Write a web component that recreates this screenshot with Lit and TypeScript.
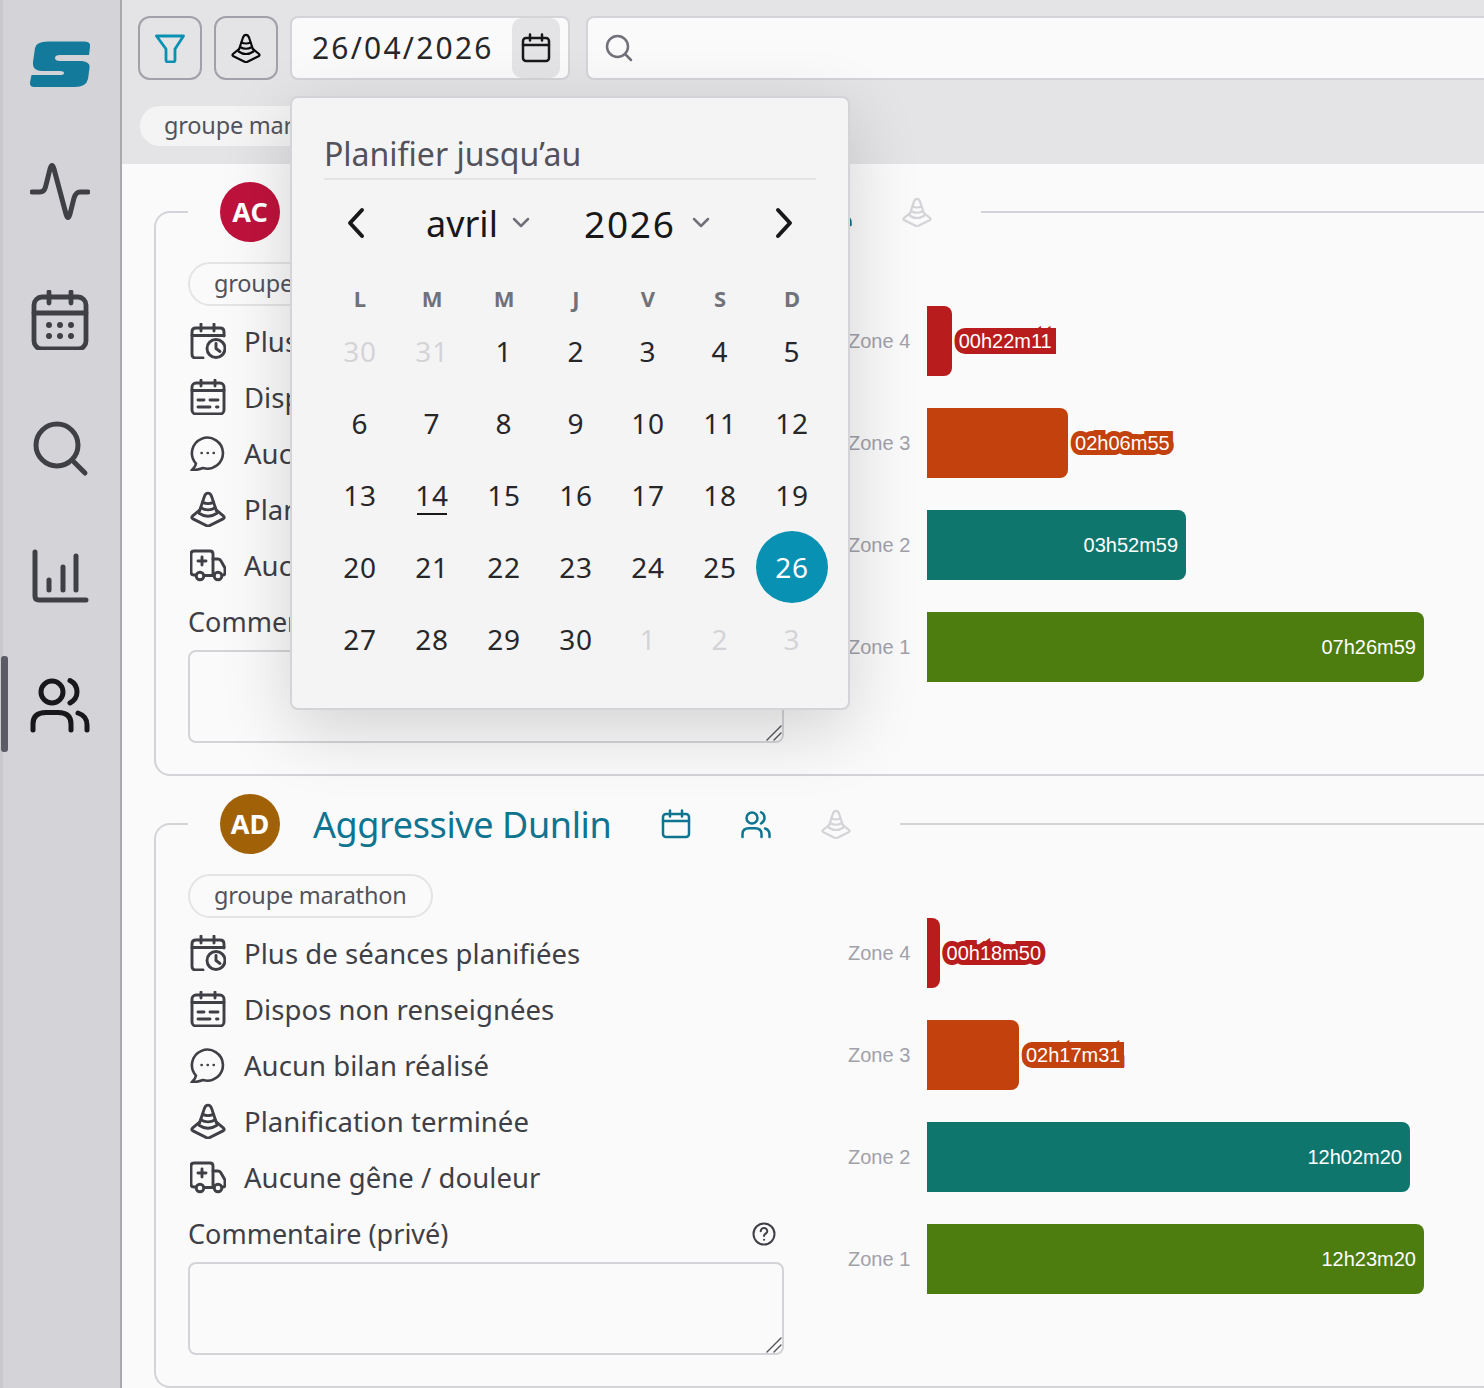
import { LitElement, html, svg, css } from "lit";
import { customElement } from "lit/decorators.js";

const ico = (vb: number, sw: number, body: unknown) =>
  html`<svg class="ic" viewBox="0 0 ${vb} ${vb}" fill="none" stroke="currentColor" stroke-width="${sw}" stroke-linecap="round" stroke-linejoin="round">${body}</svg>`;

const cone = (sw = 2.2) => ico(30, sw, svg`
  <path d="M8 16.500L12 4.500Q13 1.800 15 1.800Q17 1.800 18 4.500L22 16.500"/>
  <path d="M10.500 9.500Q15 11.500 19.500 9.500M9 14Q15 17.500 21 14"/>
  <path d="M8 16L2 21Q.8 22.200 2.500 23.200L14 29Q15 29.500 16 29L27.500 23.200Q29.200 22.200 28 21L22 16"/>
  <path d="M7.500 18.500Q15 23.500 22.500 18.500"/>`);
const calendar = () => ico(30, 2.5, svg`<rect x="2" y="5" width="26" height="23" rx="3"/><path d="M2 12H28M9 1.500V7.500M21 1.500V7.500"/>`);
const users = () => ico(60, 5, svg`<circle cx="22" cy="18" r="11"/><path d="M40 6.500Q47 10 47 18Q47 25 40 29"/><path d="M3 56V50Q3 38.500 16 38.500H28Q41 38.500 41 50V56"/><path d="M48 39Q57 42 57 51V56"/>`);
const caret = () => ico(20, 2.5, svg`<path d="M3 6L10 13L17 6"/>`);

const rowIcons = [
  ico(36, 2.9, svg`<path d="M13 35H6Q2 35 2 31V9Q2 5 6 5H30Q34 5 34 9V13"/><path d="M2 12.500H34M11 1V8M24 1V8"/><circle cx="26" cy="25.500" r="9"/><path d="M26 20.500V25.500L30 28.500"/>`),
  ico(36, 2.9, svg`<rect x="2" y="4" width="32" height="31" rx="4"/><path d="M2 11.500H34M11 1V7M25 1V7M8 21H14M20 21H28M8 28H20M26.500 28H28"/>`),
  ico(36, 2.6, svg`<path d="M6 28.600A15.500 15.500 0 1 1 13 33Q8 35 1.500 35.400Q5.500 32 6 28.600Z"/><path d="M11.600 18H11.700M17.700 18H17.800M23.700 18H23.800"/>`),
  cone(2.4),
  ico(36, 2.9, svg`<path d="M6 28H4Q1 28 1 25V7Q1 4 4 4H20Q23 4 23 7V28"/><path d="M23 12H28Q30 12 31 14L35 21V26Q35 28 32.500 28"/><circle cx="10" cy="29" r="3.800"/><circle cx="28" cy="29" r="3.800"/><path d="M14 28.500H24M12 10V18M8 14H16"/>`),
];

type Zone = { n: number; t: string; c: string; square?: boolean };
type Athlete = { ini: string; name: string; w: number; col: string; zones: Zone[] };
const z4 = "#b91c1c", z3 = "#c2410c", z2 = "#0f766e", z1 = "#4d7c0f";
const athletes: Athlete[] = [
  { ini: "AC", name: "Adventurous Cockatoo", w: 379, col: "#be123c", zones: [
    { n: 4, t: "00h22m11", c: z4, square: true }, { n: 3, t: "02h06m55", c: z3 }, { n: 2, t: "03h52m59", c: z2 }, { n: 1, t: "07h26m59", c: z1 } ] },
  { ini: "AD", name: "Aggressive Dunlin", w: 298, col: "#a16207", zones: [
    { n: 4, t: "00h18m50", c: z4 }, { n: 3, t: "02h17m31", c: z3, square: true }, { n: 2, t: "12h02m20", c: z2 }, { n: 1, t: "12h23m20", c: z1 } ] },
];
const secs = (t: string) => { const m = t.match(/(\d+)h(\d+)m(\d+)/)!; return +m[1] * 3600 + +m[2] * 60 + +m[3]; };
const rows = ["Plus de séances planifiées", "Dispos non renseignées", "Aucun bilan réalisé", "Planification terminée", "Aucune gêne / douleur"];
const days: [string, string][] = [];
["30", "31"].forEach((d) => days.push([d, "muted"]));
for (let i = 1; i <= 30; i++) days.push([String(i), i === 26 ? "sel" : i === 14 ? "today" : ""]);
["1", "2", "3"].forEach((d) => days.push([d, "muted"]));

@customElement("app-root")
export class AppRoot extends LitElement {
  static styles = css`
    :host { display: flex; width: 1484px; height: 1388px; overflow: hidden; font-family: "Noto Sans", sans-serif; color: #3f3f46; background: #fafafa; }
    .ic { display: block; width: 100%; height: 100%; }
    .side { flex: none; width: 120px; background: #d4d4d8; box-shadow: inset 3px 0 0 #c9c9cd; border-right: 2px solid #a8a8ad; position: relative; display: flex; flex-direction: column; }
    .side .item { height: 128px; display: flex; align-items: center; justify-content: center; }
    .side .glyph { width: 60px; height: 60px; }
    .side .on { color: #18181b; }
    .indicator { position: absolute; left: 1px; top: 656px; width: 7px; height: 96px; border-radius: 3px; background: #5b5b66; }
    .main { flex: 1; min-width: 0; display: flex; flex-direction: column; }
    .head { flex: none; height: 164px; box-sizing: border-box; padding: 16px 0 0 16px; background: #e4e4e7; }
    .tools { display: flex; gap: 12px; height: 64px; }
    .btn { flex: none; width: 64px; height: 64px; box-sizing: border-box; border: 2px solid #a1a1aa; border-radius: 12px; display: flex; align-items: center; justify-content: center; background: #e4e4e7; }
    .btn svg { width: 30px; height: 30px; }
    .filter { color: #0891b2; }
    .cone-b { color: #09090b; }
    .date { flex: none; width: 280px; height: 64px; box-sizing: border-box; border: 2px solid #d4d4d8; border-radius: 8px; background: #fafafa; position: relative; display: flex; align-items: center; padding: 0 0 2px 20px; font-size: 30px; letter-spacing: 2.2px; color: #27272a; }
    .date .cal { position: absolute; right: 8px; top: 0; width: 48px; height: 60px; border-radius: 10px; background: #e4e4e7; color: #18181b; display: flex; align-items: center; justify-content: center; }
    .date .cal svg { width: 30px; height: 30px; }
    .search { flex: none; width: 1000px; height: 64px; box-sizing: border-box; margin-left: 4px; border: 2px solid #d4d4d8; border-radius: 8px; background: #fafafa; display: flex; align-items: center; padding-left: 17px; color: #71717a; }
    .search svg { width: 28px; height: 28px; }
    .chip { display: inline-flex; align-items: center; box-sizing: border-box; white-space: nowrap; font-size: 23.5px; color: #52525b; letter-spacing: -.2px; border-radius: 22px; padding-bottom: 2px; }
    .head .chip { height: 40px; margin: 26px 0 0 2px; padding: 0 24px 2px; background: #f4f4f5; }
    .content { flex: 1; display: flex; flex-direction: column; gap: 18px; padding: 18px 0 0 32px; }
    fieldset { flex: none; width: 1500px; box-sizing: border-box; margin: 0; padding: 20px 32px 31px; border: 2px solid #d4d4d8; border-radius: 16px; min-inline-size: 0; }
    legend { display: flex; align-items: center; padding: 0 40px 0 32px; margin: 0; height: 60px; }
    .avatar { flex: none; width: 60px; height: 60px; box-sizing: border-box; padding-bottom: 2px; border-radius: 50%; color: #fff; font-weight: 700; font-size: 27px; display: flex; align-items: center; justify-content: center; }
    .name { flex: none; margin-left: 33px; font-size: 36px; color: #0e7490; white-space: nowrap; letter-spacing: -.4px; }
    .lact { flex: none; width: 48px; height: 48px; margin-left: 32px; display: flex; align-items: center; justify-content: center; color: #0e7490; }
    .lact.first { margin-left: 41px; }
    .lact svg { width: 30px; height: 30px; }
    .lact.off { color: #d4d4d8; }
    .body { display: flex; gap: 64px; }
    .left { flex: none; width: 596px; display: flex; flex-direction: column; }
    .left .chip { align-self: flex-start; height: 44px; padding: 0 24px 2px; border: 2px solid #e4e4e7; background: #fafafa; margin-bottom: 7px; }
    .row { height: 56px; display: flex; align-items: center; gap: 18px; font-size: 27.5px; letter-spacing: .05px; white-space: nowrap; }
    .row .i { flex: none; width: 36px; height: 36px; margin-left: 2px; }
    .clabel { height: 57px; display: flex; align-items: center; justify-content: space-between; font-size: 27px; padding-right: 8px; }
    .help { display: block; width: 24px; height: 24px; }
    .ta { position: relative; height: 93px; }
    textarea { display: block; width: 596px; height: 93px; box-sizing: border-box; border: 2px solid #d4d4d8; border-radius: 8px; background: transparent; margin: 0; padding: 8px; outline: none; resize: none; }
    .grip { position: absolute; right: 2px; bottom: 2px; width: 16px; height: 16px; color: #52525b; }
    .chart { padding-top: 44px; display: flex; flex-direction: column; gap: 32px; font-family: "Liberation Sans", sans-serif; font-size: 20px; }
    .zone { height: 70px; display: flex; align-items: center; }
    .zone .lab { flex: none; width: 79px; color: #a1a1aa; }
    .bar { flex: none; height: 70px; border-radius: 0 8px 8px 0; display: flex; align-items: center; justify-content: flex-end; color: #fff; box-sizing: border-box; }
    .out { margin-left: 3px; height: 26px; display: flex; align-items: center; padding: 0 4px; color: #fff; white-space: nowrap; -webkit-text-stroke-width: 10px; paint-order: stroke fill; stroke-linejoin: round; }
    .out.square { border-radius: 10px 0 0 10px; }
    .pop { position: absolute; left: -2px; top: 78px; z-index: 5; width: 560px; height: 614px; box-sizing: border-box; padding: 36px 19px 0 32px; border: 2px solid #d4d4d8; border-radius: 8px; background: #f4f4f5; box-shadow: 0 20px 70px rgba(0,0,0,.16); color: #18181b; letter-spacing: 0; }
    .ptitle { width: 492px; height: 46px; box-sizing: border-box; border-bottom: 2px solid #e4e4e7; font-size: 32px; line-height: 40px; color: #52525b; }
    .nav { display: flex; align-items: center; height: 64px; margin-top: 11px; }
    .chev { flex: none; width: 48px; height: 48px; color: #18181b; }
    .chev.p { margin-left: 8px; }
    .month { margin-left: 46px; font-size: 36px; }
    .year { margin-left: 53px; font-size: 37px; letter-spacing: 1.8px; }
    .caret { flex: none; width: 20px; height: 20px; margin-left: 13px; color: #71717a; }
    .year + .caret { margin-left: 15px; }
    .chev.n { margin-left: auto; margin-right: 21px; }
    .grid { display: grid; grid-template-columns: repeat(7, 72px); margin-top: 27px; }
    .wd { height: 33px; box-sizing: border-box; padding-bottom: 2px; display: flex; align-items: center; justify-content: center; font-size: 22px; font-weight: 700; color: #71717a; }
    .d { height: 72px; display: flex; align-items: center; justify-content: center; font-size: 28px; color: #27272a; position: relative; letter-spacing: .8px; }
    .d.muted { color: #d4d4d8; }
    .d.sel { background: #0891b2; color: #fff; border-radius: 50%; }
    .d.today::after { content: ""; position: absolute; left: 21px; right: 21px; bottom: 16px; height: 2px; background: #18181b; }
  `;

  private chart(zones: Zone[]) {
    const max = Math.max(...zones.map((z) => secs(z.t)));
    return html`<div class="chart">${zones.map((z) => {
      const w = (secs(z.t) / max) * 497;
      const inside = w > 200;
      return html`<div class="zone"><span class="lab">Zone ${z.n}</span>
        <div class="bar" style="width:${w}px;background:${z.c};padding-right:${inside ? 8 : 0}px">${inside ? z.t : ""}</div>
        ${inside ? "" : html`<span class="out ${z.square ? "square" : ""}" style="-webkit-text-stroke-color:${z.c};background:${z.square ? z.c : "none"}">${z.t}</span>`}
      </div>`;
    })}</div>`;
  }

  private card(a: Athlete) {
    return html`<fieldset>
      <legend>
        <span class="avatar" style="background:${a.col}">${a.ini}</span>
        <span class="name" style="width:${a.w}px">${a.name}</span>
        <span class="lact first">${calendar()}</span>
        <span class="lact">${users()}</span>
        <span class="lact off">${cone()}</span>
      </legend>
      <div class="body">
        <div class="left">
          <span class="chip">groupe marathon</span>
          ${rows.map((r, i) => html`<div class="row"><span class="i">${rowIcons[i]}</span>${r}</div>`)}
          <div class="clabel"><span>Commentaire (privé)</span>
            <span class="help">${ico(24, 2, svg`<circle cx="12" cy="12" r="10.500"/><path d="M8.700 9.200A3.300 3.300 0 0 1 15.300 9.200C15.300 11.500 12 11.800 12 14"/><path d="M12 17.800H12.100"/>`)}</span>
          </div>
          <div class="ta"><textarea></textarea>
            <span class="grip">${ico(16, 1.4, svg`<path d="M1 15L15 1M8 15L15 8"/>`)}</span></div>
        </div>
        ${this.chart(a.zones)}
      </div>
    </fieldset>`;
  }

  render() {
    return html`
      <nav class="side">
        <div class="item"><svg class="glyph" viewBox="30 34 60 60" fill="#137a9b"><path d="M38 41.500H84Q91 41.500 90 47L89 55H60Q55 55 55 58Q55 61 60 61H82Q90.500 62 89.500 68L88 79Q86 87 75 87H34Q29.500 87 30 82.500L31.500 75H60Q64 75 64 73Q64 71 60 71H42Q32 71 33 62L35 48Q36 41.500 48 41.500Z"/></svg></div>
        <div class="item"><span class="glyph">${ico(60, 5, svg`<path d="M2 30H10Q14 30 15.500 25L20 7Q22 0 24 7L36 52Q38 59 40 52L44 36Q46 30 50 30H58"/>`)}</span></div>
        <div class="item"><span class="glyph">${ico(60, 4.8, svg`<rect x="4" y="7" width="52" height="52" rx="8"/><path d="M4 23H56M19 2V13M41 2V13"/><g fill="currentColor" stroke="none"><circle cx="19" cy="35" r="3"/><circle cx="30" cy="35" r="3"/><circle cx="41" cy="35" r="3"/><circle cx="19" cy="46" r="3"/><circle cx="30" cy="46" r="3"/><circle cx="41" cy="46" r="3"/></g>`)}</span></div>
        <div class="item"><span class="glyph">${ico(60, 5, svg`<circle cx="27" cy="27" r="21"/><path d="M44 44L55 55"/>`)}</span></div>
        <div class="item"><span class="glyph">${ico(60, 5, svg`<path d="M5 6V50Q5 54 9 54H56"/><path d="M19 34V44M33 21V44M46 10V44"/>`)}</span></div>
        <div class="item on"><span class="glyph">${users()}</span></div>
        <div class="indicator"></div>
      </nav>
      <div class="main">
        <header class="head">
          <div class="tools">
            <div class="btn filter">${ico(30, 2.8, svg`<path d="M1.500 3H28.500L20 16V27Q20 29 18 29H13Q11 29 11 27V16Z"/>`)}</div>
            <div class="btn cone-b">${cone()}</div>
            <div class="date">26/04/2026
              <span class="cal">${calendar()}</span>
              <div class="pop">
                <div class="ptitle">Planifier jusqu’au</div>
                <div class="nav">
                  <span class="chev p">${ico(48, 4, svg`<path d="M30 11L18 24L30 37"/>`)}</span>
                  <span class="month">avril</span>
                  <span class="caret">${caret()}</span>
                  <span class="year">2026</span>
                  <span class="caret">${caret()}</span>
                  <span class="chev n">${ico(48, 4, svg`<path d="M18 11L30 24L18 37"/>`)}</span>
                </div>
                <div class="grid">
                  ${["L", "M", "M", "J", "V", "S", "D"].map((d) => html`<div class="wd">${d}</div>`)}
                  ${days.map(([d, c]) => html`<div class="d ${c}">${d}</div>`)}
                </div>
              </div>
            </div>
            <div class="search">${ico(28, 2.5, svg`<circle cx="12.500" cy="12.500" r="10.500"/><path d="M20.500 20.500L26 26"/>`)}</div>
          </div>
          <span class="chip">groupe marathon</span>
        </header>
        <div class="content">${athletes.map((a) => this.card(a))}</div>
      </div>`;
  }
}
